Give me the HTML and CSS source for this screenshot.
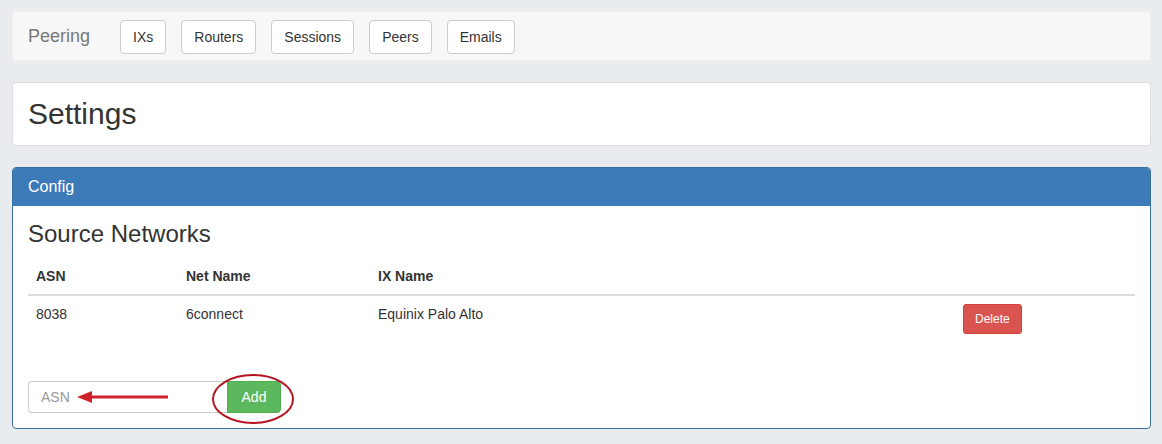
FILE: index.html
```html
<!DOCTYPE html>
<html lang="en">
<head>
  <meta charset="UTF-8" />
  <title>Peering - Settings</title>
  <link rel="stylesheet" href="styles.css">
</head>
<body>

<div class="page">
  <nav class="navbar">
    <span class="brand">Peering</span>
    <div class="nav-buttons">
      <button class="nav-btn">IXs</button>
      <button class="nav-btn">Routers</button>
      <button class="nav-btn">Sessions</button>
      <button class="nav-btn">Peers</button>
      <button class="nav-btn">Emails</button>
    </div>
  </nav>

  <div class="title-card">
    <h2>Settings</h2>
  </div>

  <div class="panel">
    <div class="panel-heading">Config</div>
    <div class="panel-body">
      <h3>Source Networks</h3>
      <table class="networks">
        <thead>
          <tr>
            <th class="col-asn">ASN</th>
            <th class="col-net">Net Name</th>
            <th class="col-ix">IX Name</th>
            <th></th>
          </tr>
        </thead>
        <tbody>
          <tr>
            <td>8038</td>
            <td>6connect</td>
            <td>Equinix Palo Alto</td>
            <td><button class="btn-delete">Delete</button></td>
          </tr>
        </tbody>
      </table>

      <div class="add-form">
        <div class="input-group">
          <input type="text" placeholder="ASN">
          <button class="btn-add">Add</button>
        </div>
        <!-- screenshot annotations -->
        <svg class="mark-arrow" width="100" height="16" viewBox="0 0 100 16">
          <line x1="14" y1="8" x2="92" y2="8" stroke="#d0222b" stroke-width="3"/>
          <polygon points="1,8 16,2 16,14" fill="#d0222b"/>
        </svg>
        <svg class="mark-circle" width="84" height="52" viewBox="0 0 84 52">
          <ellipse cx="42" cy="26" rx="40" ry="24" fill="none" stroke="#b3141f" stroke-width="2"/>
        </svg>
      </div>
    </div>
  </div>
</div>

</body>
</html>
```

FILE: styles.css
```css
body {
  margin: 0;
  font-family: "Liberation Sans", Arial, sans-serif;
  font-size: 14px;
  color: #333;
  background-color: #e9ecef;
}
.page {
  padding: 11px 11px 14px 12px;
}
.navbar {
  box-sizing: border-box;
  height: 50px;
  background: #f7f7f7;
  border: 1px solid #eeeff0;
  border-radius: 4px;
  display: flex;
  align-items: center;
  padding: 0 15px;
  margin-bottom: 21px;
}
.brand {
  font-size: 18px;
  color: #777;
  margin-right: 30px;
}
.nav-buttons {
  display: flex;
  gap: 15px;
  margin-top: 2px;
}
.nav-btn {
  font-family: inherit;
  font-size: 14px;
  color: #333;
  background: #fff;
  border: 1px solid #ccc;
  border-radius: 4px;
  padding: 6px 12px;
  line-height: 20px;
}
.title-card {
  box-sizing: border-box;
  height: 64px;
  background: #fff;
  border: 1px solid #dcdfe2;
  border-radius: 4px;
  padding: 0 15px;
  display: flex;
  align-items: center;
  margin-bottom: 21px;
}
.title-card h2 {
  margin: 0 0 2px;
  font-size: 30px;
  font-weight: normal;
  line-height: 1.1;
}
.panel {
  background: #fff;
  border: 1px solid #3b6f9e;
  border-radius: 4px;
}
.panel-heading {
  background: #3d7ab8;
  color: #fff;
  font-size: 16px;
  padding: 10px 15px;
  line-height: 18px;
  height: 18px;
  border-radius: 3px 3px 0 0;
}
.panel-body {
  padding: 15px;
}
.panel-body h3 {
  margin: 0 0 11px;
  font-size: 24px;
  font-weight: normal;
  line-height: 26px;
}
.networks {
  width: 100%;
  border-collapse: collapse;
  margin-bottom: 39px;
}
.networks th {
  text-align: left;
  font-weight: bold;
  padding: 8px;
  line-height: 20px;
  border-bottom: 2px solid #ddd;
}
.networks td {
  padding: 8px;
  line-height: 20px;
  vertical-align: top;
}
.col-asn { width: 134px; }
.col-net { width: 176px; }
.col-ix { width: 569px; }
.btn-delete {
  font-family: inherit;
  font-size: 12px;
  line-height: 18px;
  color: #fff;
  background: #d9534f;
  border: 1px solid #d43f3a;
  border-radius: 3px;
  padding: 5px 11px;
}
.add-form {
  position: relative;
}
.input-group {
  display: flex;
}
.input-group input {
  box-sizing: border-box;
  width: 199px;
  height: 32px;
  font-family: inherit;
  font-size: 14px;
  padding: 6px 12px;
  border: 1px solid #ccc;
  border-right: none;
  border-radius: 4px 0 0 4px;
  outline: none;
}
.input-group input::placeholder {
  color: #999;
}
.btn-add {
  box-sizing: border-box;
  width: 54px;
  height: 32px;
  font-family: inherit;
  font-size: 14px;
  color: #fff;
  background: #5cb85c;
  border: 1px solid #4cae4c;
  border-radius: 0 4px 4px 0;
}
.mark-arrow {
  position: absolute;
  left: 48px;
  top: 8px;
}
.mark-circle {
  position: absolute;
  left: 183px;
  top: -8px;
}
```
